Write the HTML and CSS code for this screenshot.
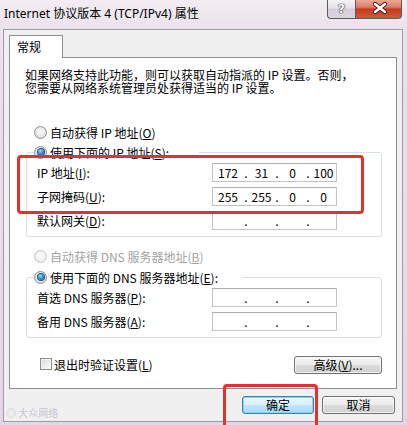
FILE: index.html
```html
<!DOCTYPE html>
<html lang="zh-CN">
<head>
<meta charset="utf-8">
<title>Internet 协议版本 4 (TCP/IPv4) 属性</title>
<link rel="stylesheet" href="styles.css">
</head>
<body>
<div class="window">
  <div class="titlebar">
    <span class="title">Internet 协议版本 4 (TCP/IPv4) 属性</span>
    <div class="caption-btns">
      <div class="cap-btn help"><span>?</span></div>
      <div class="cap-btn close">
        <svg width="47" height="19" viewBox="0 0 47 19">
          <path d="M19 5 L29 13 M29 5 L19 13" stroke="#4a1d16" stroke-width="4.2" stroke-linecap="round"/>
          <path d="M19 5 L29 13 M29 5 L19 13" stroke="#ffffff" stroke-width="2.4" stroke-linecap="round"/>
        </svg>
      </div>
    </div>
  </div>

  <div class="client">
    <div class="tabs"><div class="tab">常规</div></div>
    <div class="panel">
      <p class="intro">如果网络支持此功能，则可以获取自动指派的 IP 设置。否则，<br>您需要从网络系统管理员处获得适当的 IP 设置。</p>

      <div class="radio-row"><span class="radio"></span><span>自动获得 IP 地址(<u>O</u>)</span></div>

      <fieldset class="group">
        <legend class="legend ip"><span class="radio checked"></span><span>使用下面的 IP 地址(<u>S</u>):</span></legend>
        <div class="field">
          <span class="label">IP 地址(<u>I</u>):</span>
          <div class="ipbox"><span>172</span><i>.</i><span>31</span><i>.</i><span>0</span><i>.</i><span>100</span></div>
        </div>
        <div class="field">
          <span class="label">子网掩码(<u>U</u>):</span>
          <div class="ipbox"><span>255</span><i>.</i><span>255</span><i>.</i><span>0</span><i>.</i><span>0</span></div>
        </div>
        <div class="field">
          <span class="label">默认网关(<u>D</u>):</span>
          <div class="ipbox"><span></span><i>.</i><span></span><i>.</i><span></span><i>.</i><span></span></div>
        </div>
      </fieldset>

      <div class="radio-row dns-auto disabled"><span class="radio"></span><span>自动获得 DNS 服务器地址(<u>B</u>)</span></div>

      <fieldset class="group dns">
        <legend class="legend"><span class="radio checked"></span><span>使用下面的 DNS 服务器地址(<u>E</u>):</span></legend>
        <div class="field">
          <span class="label">首选 DNS 服务器(<u>P</u>):</span>
          <div class="ipbox"><span></span><i>.</i><span></span><i>.</i><span></span><i>.</i><span></span></div>
        </div>
        <div class="field">
          <span class="label">备用 DNS 服务器(<u>A</u>):</span>
          <div class="ipbox"><span></span><i>.</i><span></span><i>.</i><span></span><i>.</i><span></span></div>
        </div>
      </fieldset>

      <div class="bottom-row">
        <label class="check-row"><span class="checkbox"></span><span>退出时验证设置(<u>L</u>)</span></label>
        <div class="btn adv">高级(<u>V</u>)...</div>
      </div>
    </div>

    <div class="footer">
      <div class="btn ok">确定</div>
      <div class="btn cancel">取消</div>
    </div>
  </div>

  <div class="watermark">◎ 大众网络</div>
  <div class="mark mark-ip"></div>
  <div class="mark mark-ok"></div>
</div>
</body>
</html>
```

FILE: styles.css
```css
* { box-sizing: border-box; }

body {
  margin: 0;
  font-family: "Noto Sans CJK SC", "Noto Sans", sans-serif;
  font-size: 12px;
  color: #000;
  background: #e6dae7;
}

.window {
  position: relative;
  width: 407px;
  height: 425px;
  overflow: hidden;
  background: linear-gradient(to bottom, #f2edf2 0, #ebe2eb 30px, #e4d6e5 100%);
}

/* ---------- title bar ---------- */
.titlebar {
  height: 29px;
  display: flex;
  align-items: flex-start;
}

.title {
  font-family: "Noto Sans", "Noto Sans CJK SC", sans-serif;
  font-size: 12px;
  line-height: 28px;
  padding-left: 4px;
  color: #000;
  white-space: nowrap;
}

.caption-btns {
  margin-left: auto;
  margin-right: 5px;
  display: flex;
}

.cap-btn {
  height: 19px;
  border: 1px solid #5c5a62;
  border-top: none;
}

.help {
  width: 28px;
  border-radius: 0 0 0 4px;
  border-right: none;
  background: linear-gradient(to bottom, #f6f2f6 0, #e6e0e8 45%, #d4ccd8 50%, #dcd6e0 100%);
  display: flex;
  justify-content: center;
}

.help span {
  font-family: "DejaVu Sans", sans-serif;
  font-weight: bold;
  font-size: 13px;
  line-height: 17px;
  color: #f7f7f7;
  text-shadow: 0 0 1px #333, 0 0 1px #333, 0 0 1px #333;
}

.close {
  width: 47px;
  border-radius: 0 0 4px 0;
  background: linear-gradient(to bottom, #e9a898 0, #dc7a64 40%, #c53a20 52%, #d25a3e 100%);
}

.close svg { display: block; margin-top: -1px; }

/* ---------- client area ---------- */
.client {
  margin-left: 3px;
  width: 400px;
  border: 1px solid #9f9aa6;
  background: #f0f0f0;
}

.tabs {
  padding: 5px 5px 0;
  display: flex;
}

.tab {
  position: relative;
  z-index: 1;
  width: 54px;
  height: 23px;
  margin-bottom: -1px;
  border: 1px solid #8e8f96;
  border-bottom: none;
  background: #fff;
  padding-left: 7px;
  line-height: 22px;
}

.panel {
  margin: 0 5px;
  border: 1px solid #8e8f96;
  background: #fff;
  padding: 0 14px 14px 0;
}

.intro {
  margin: 10px 0 0 15px;
  line-height: 13px;
  white-space: nowrap;
}

/* radios */
.radio-row {
  display: flex;
  align-items: center;
  height: 16px;
  gap: 3px;
  margin: 30px 0 0 24px;
  white-space: nowrap;
}

.radio {
  width: 13px;
  height: 13px;
  border-radius: 50%;
  border: 1px solid #8f8f8f;
  background: radial-gradient(circle at 50% 40%, #fafafa 0, #e6e6e6 55%, #cfcfcf 100%);
  display: flex;
  align-items: center;
  justify-content: center;
  flex: none;
}

.radio.checked::after {
  content: "";
  width: 6px;
  height: 6px;
  border-radius: 50%;
  background: radial-gradient(circle at 40% 35%, #9fdcff 0, #2f8ed6 50%, #0d3f86 100%);
  box-shadow: 0 0 0 1px #1a4f90;
}

.disabled { color: #a3a3a3; }
.disabled .radio {
  border-color: #c4c4c4;
  background: radial-gradient(circle at 50% 40%, #fcfcfc 0, #f0f0f0 60%, #e2e2e2 100%);
}

/* group boxes */
.group {
  margin: 4px 0 0 16px;
  border: 1px solid #d5dfe5;
  border-radius: 3px;
  padding: 3px 0 6px 10px;
  min-width: 0;
}

.group.dns { margin-top: 5px; }

.legend {
  display: flex;
  align-items: center;
  gap: 3px;
  height: 16px;
  padding: 0 30px 0 0;
  margin-left: -3px;
  white-space: nowrap;
  background: #fff;
}

.group.dns .legend { padding-right: 24px; }

.field {
  display: flex;
  align-items: center;
  height: 19px;
}

.field + .field { margin-top: 5px; }

.label {
  width: 175px;
  flex: none;
  white-space: nowrap;
}

.ipbox {
  width: 125px;
  height: 19px;
  border: 1px solid #c2c2c2;
  border-top-color: #adadb3;
  display: grid;
  grid-template-columns: 30px 6px 25px 6px 25px 6px 25px;
  align-items: center;
  line-height: 17px;
  text-align: center;
  background: #fff;
}

.ipbox i { font-style: normal; }

.dns-auto { margin-top: 11px; }

/* bottom row */
.bottom-row {
  margin: 18px 0 0 30px;
  display: flex;
  justify-content: space-between;
  align-items: flex-start;
}

.check-row {
  display: flex;
  align-items: center;
  gap: 2px;
  height: 14px;
  margin-top: 1px;
}

.checkbox {
  width: 12px;
  height: 12px;
  border: 1px solid #8f8f8f;
  background: linear-gradient(135deg, #d8d8d8 0, #f2f2f2 70%, #ffffff 100%);
  box-shadow: inset 0 0 0 1px #f4f4f4;
}

.btn {
  height: 18px;
  border: 1px solid #707070;
  border-radius: 3px;
  background: linear-gradient(to bottom, #f4f4f4 0, #ebebeb 48%, #dddddd 52%, #cfcfcf 100%);
  box-shadow: inset 0 0 0 1px rgba(255,255,255,0.7);
  display: flex;
  align-items: center;
  justify-content: center;
  line-height: 16px;
  white-space: nowrap;
}

.adv { width: 88px; }

.footer {
  display: flex;
  justify-content: flex-end;
  gap: 8px;
  padding: 7px 7px 7px 0;
}

.ok {
  width: 72px;
  border-color: #3c7fb1;
  background: linear-gradient(to bottom, #eaf6fd 0, #d9f0fc 48%, #bee6fd 52%, #a7d9f5 100%);
  box-shadow: inset 0 0 0 1px #8ed0f5;
}

.cancel { width: 73px; }

/* overlays */
.watermark {
  position: absolute;
  left: 6px;
  top: 407px;
  font-size: 10px;
  line-height: 12px;
  color: rgba(140, 140, 160, 0.45);
}

.mark {
  position: absolute;
  border: 3px solid #e3322c;
  border-radius: 4px;
}

.mark-ip {
  left: 17px;
  top: 155px;
  width: 347px;
  height: 59px;
}

.mark-ok {
  left: 223px;
  top: 384px;
  width: 95px;
  height: 45px;
}
```
